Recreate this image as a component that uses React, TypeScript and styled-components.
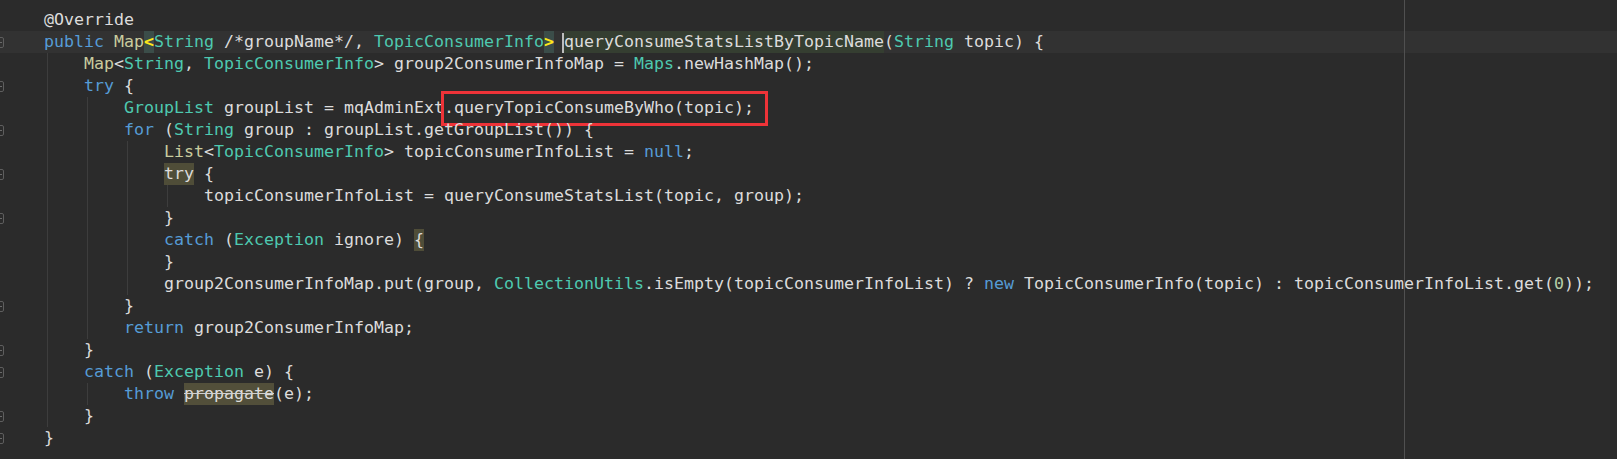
import styled, { createGlobalStyle } from 'styled-components';

// token kinds: p plain, k keyword, t class, i interface, n number,
// m brace match, o usage highlight, d deprecated, h word at caret, c caret, b boxed
type Kind = 'p' | 'k' | 't' | 'i' | 'n' | 'm' | 'o' | 'd' | 'h' | 'c' | 'b';
type Tok = [Kind, string];

interface CodeLine {
  toks: Tok[];
  guides: number[];
  fold?: boolean;
  current?: boolean;
}

const colors: Record<string, string> = {
  p: '#dcdcdc',
  k: '#569cd6',
  t: '#4ec9b0',
  i: '#c9cc9f',
  n: '#b5cea8',
};

const G1 = 47;
const G2 = 87;
const G3 = 127;
const G4 = 167;

const lines: CodeLine[] = [
  { toks: [['p', '@Override']], guides: [] },
  {
    toks: [
      ['k', 'public'],
      ['p', ' '],
      ['i', 'Map'],
      ['m', '<'],
      ['t', 'String'],
      ['p', ' /*groupName*/, '],
      ['t', 'TopicConsumerInfo'],
      ['m', '>'],
      ['p', ' '],
      ['c', ''],
      ['h', 'queryConsumeStatsListByTopicName'],
      ['p', '('],
      ['t', 'String'],
      ['p', ' topic) {'],
    ],
    guides: [],
    fold: true,
    current: true,
  },
  {
    toks: [
      ['p', '    '],
      ['i', 'Map'],
      ['p', '<'],
      ['t', 'String'],
      ['p', ', '],
      ['t', 'TopicConsumerInfo'],
      ['p', '> group2ConsumerInfoMap = '],
      ['t', 'Maps'],
      ['p', '.newHashMap();'],
    ],
    guides: [G1],
  },
  { toks: [['p', '    '], ['k', 'try'], ['p', ' {']], guides: [G1], fold: true },
  {
    toks: [
      ['p', '        '],
      ['t', 'GroupList'],
      ['p', ' groupList = mqAdminExt'],
      ['b', '.queryTopicConsumeByWho(topic);'],
    ],
    guides: [G1, G2],
  },
  {
    toks: [
      ['p', '        '],
      ['k', 'for'],
      ['p', ' ('],
      ['t', 'String'],
      ['p', ' group : groupList.getGroupList()) {'],
    ],
    guides: [G1, G2],
    fold: true,
  },
  {
    toks: [
      ['p', '            '],
      ['i', 'List'],
      ['p', '<'],
      ['t', 'TopicConsumerInfo'],
      ['p', '> topicConsumerInfoList = '],
      ['k', 'null'],
      ['p', ';'],
    ],
    guides: [G1, G2, G3],
  },
  { toks: [['p', '            '], ['o', 'try'], ['p', ' {']], guides: [G1, G2, G3], fold: true },
  {
    toks: [['p', '                topicConsumerInfoList = queryConsumeStatsList(topic, group);']],
    guides: [G1, G2, G3, G4],
  },
  { toks: [['p', '            }']], guides: [G1, G2, G3], fold: true },
  {
    toks: [
      ['p', '            '],
      ['k', 'catch'],
      ['p', ' ('],
      ['t', 'Exception'],
      ['p', ' ignore) '],
      ['o', '{'],
    ],
    guides: [G1, G2, G3],
  },
  { toks: [['p', '            }']], guides: [G1, G2, G3] },
  {
    toks: [
      ['p', '            group2ConsumerInfoMap.put(group, '],
      ['t', 'CollectionUtils'],
      ['p', '.isEmpty(topicConsumerInfoList) ? '],
      ['k', 'new'],
      ['p', ' TopicConsumerInfo(topic) : topicConsumerInfoList.get('],
      ['n', '0'],
      ['p', '));'],
    ],
    guides: [G1, G2, G3],
  },
  { toks: [['p', '        }']], guides: [G1, G2], fold: true },
  { toks: [['p', '        '], ['k', 'return'], ['p', ' group2ConsumerInfoMap;']], guides: [G1, G2] },
  { toks: [['p', '    }']], guides: [G1], fold: true },
  {
    toks: [['p', '    '], ['k', 'catch'], ['p', ' ('], ['t', 'Exception'], ['p', ' e) {']],
    guides: [G1],
    fold: true,
  },
  {
    toks: [['p', '        '], ['k', 'throw'], ['p', ' '], ['d', 'propagate'], ['p', '(e);']],
    guides: [G1, G2],
  },
  { toks: [['p', '    }']], guides: [G1], fold: true },
  { toks: [['p', '}']], guides: [], fold: true },
];

const GlobalStyle = createGlobalStyle`
  html, body {
    margin: 0;
    padding: 0;
    background: #2b2b2b;
  }
`;

const Editor = styled.div`
  position: relative;
  box-sizing: border-box;
  height: 100vh;
  padding-top: 9px;
  background: #2b2b2b;
  font-family: 'DejaVu Sans Mono', 'Liberation Mono', monospace;
  font-size: 16.61px;
  overflow: hidden;

  /* right margin guide */
  &::after {
    content: '';
    position: absolute;
    top: 0;
    bottom: 0;
    left: 1404px;
    width: 1px;
    background: #505050;
  }
`;

const Line = styled.div<{ $guides: number[]; $current?: boolean }>`
  display: flex;
  height: 22px;
  line-height: 22px;
  background-color: ${(p) => (p.$current ? '#323232' : 'transparent')};
  background-image: ${(p) =>
    p.$guides.length ? p.$guides.map(() => 'linear-gradient(#3d3d3d, #3d3d3d)').join(', ') : 'none'};
  background-size: 1px 100%;
  background-repeat: no-repeat;
  background-position: ${(p) => p.$guides.map((g) => `${g}px 0`).join(', ') || '0 0'};
`;

const Gutter = styled.div`
  flex: none;
  width: 44px;
  display: flex;
  align-items: center;
  overflow: hidden;
`;

const FoldMark = styled.svg`
  margin-left: -6px;
  flex: none;
`;

const Code = styled.span`
  white-space: pre;
  color: #dcdcdc;
`;

const Tk = styled.span<{ $kind: string }>`
  color: ${(p) => colors[p.$kind] ?? '#dcdcdc'};
`;

const Mark = styled.span<{ $bg: string }>`
  display: inline-block;
  vertical-align: top;
  line-height: 22px;
  background: ${(p) => p.$bg};
`;

const BraceMatch = styled(Mark)`
  color: #ffe81a;
  font-weight: bold;
`;

const Deprecated = styled(Mark)`
  text-decoration: line-through;
  text-decoration-color: #cfcfcf;
`;

const Caret = styled.span`
  display: inline-block;
  vertical-align: top;
  width: 2px;
  height: 20px;
  margin-top: 2px;
  margin-left: -2px;
  background: #bdbdbd;
`;

const Callout = styled.span`
  display: inline-block;
  line-height: 22px;
  margin: -6px -14px -7px -3px;
  padding: 3px 11px 4px 0;
  border: 3px solid #ee3338;
`;

const Token = ({ tok }: { tok: Tok }) => {
  const [kind, text] = tok;
  switch (kind) {
    case 'm':
      return <BraceMatch $bg="#3b4d49">{text}</BraceMatch>;
    case 'o':
      return <Mark $bg="#4f4d38">{text}</Mark>;
    case 'd':
      return <Deprecated $bg="#524f3a">{text}</Deprecated>;
    case 'h':
      return <Mark $bg="#353e31">{text}</Mark>;
    case 'c':
      return <Caret />;
    case 'b':
      return <Callout>{text}</Callout>;
    default:
      return <Tk $kind={kind}>{text}</Tk>;
  }
};

const App = () => (
  <>
    <GlobalStyle />
    <Editor>
      {lines.map((line, i) => (
        <Line key={i} $guides={line.guides} $current={line.current}>
          <Gutter>
            {line.fold && (
              <FoldMark width="11" height="11" viewBox="0 0 11 11">
                <rect x="0.5" y="0.5" width="9" height="10" rx="1.5" fill="none" stroke="#5e5e5e" />
                <line x1="3" y1="5.5" x2="8" y2="5.5" stroke="#6a6a6a" />
              </FoldMark>
            )}
          </Gutter>
          <Code>
            {line.toks.map((t, j) => (
              <Token key={j} tok={t} />
            ))}
          </Code>
        </Line>
      ))}
    </Editor>
  </>
);

export default App;
